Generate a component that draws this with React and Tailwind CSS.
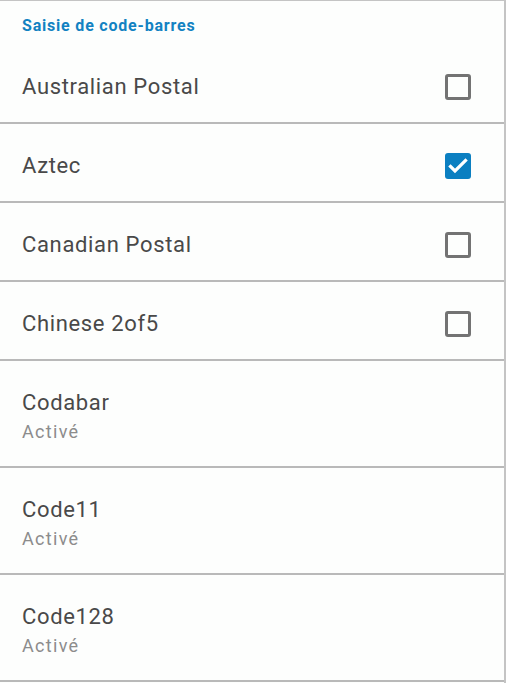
import React, { useState } from "react";

const items = [
  { name: "Australian Postal", checkbox: true, checked: false },
  { name: "Aztec", checkbox: true, checked: true },
  { name: "Canadian Postal", checkbox: true, checked: false },
  { name: "Chinese 2of5", checkbox: true, checked: false },
  { name: "Codabar", summary: "Activé" },
  { name: "Code11", summary: "Activé" },
  { name: "Code128", summary: "Activé" },
];

const CheckBox = ({ checked, onClick }) => (
  <button
    onClick={onClick}
    className={
      checked
        ? "w-[26px] h-[26px] rounded-[3px] bg-[#0b7fc1] flex items-center justify-center"
        : "w-[26px] h-[26px] rounded-[3px] border-[3px] border-[#737373]"
    }
  >
    {checked && (
      <svg width="26" height="26" viewBox="0 0 26 26" fill="none">
        <path
          d="M5.5 13.5l4.5 4.5L20.5 7.5"
          stroke="white"
          strokeWidth="3.2"
          strokeLinecap="square"
        />
      </svg>
    )}
  </button>
);

const App = () => {
  const [state, setState] = useState(items.map((i) => !!i.checked));

  const toggle = (idx) => {
    const next = [...state];
    next[idx] = !next[idx];
    setState(next);
  };

  return (
    <div
      className="w-[506px] h-[683px] bg-[#fdfefd] border-t border-r-2 border-[#c4c4c4] overflow-hidden"
      style={{ fontFamily: "Roboto, 'Noto Sans', sans-serif" }}
    >
      <div className="h-[44px] pt-[6px] px-[22px] flex items-center">
        <span className="text-[16px] tracking-[0.8px] font-bold text-[#1282c2]">
          Saisie de code-barres
        </span>
      </div>

      {items.map((item, idx) =>
        item.checkbox ? (
          <div
            key={item.name}
            className="h-[79px] border-b-2 border-[#b9b9b9] pt-[6px] pl-[22px] pr-[33px] flex items-center justify-between"
          >
            <span className="text-[22px] tracking-[0.65px] text-[#494949]">
              {item.name}
            </span>
            <CheckBox checked={state[idx]} onClick={() => toggle(idx)} />
          </div>
        ) : (
          <div
            key={item.name}
            className="h-[107px] border-b-2 border-[#b9b9b9] pl-[22px] pt-[28px]"
          >
            <div className="text-[22px] tracking-[0.65px] leading-[28px] text-[#494949]">
              {item.name}
            </div>
            <div className="mt-[3px] text-[18px] tracking-[1.3px] leading-[24px] text-[#8c8c8c]">
              {item.summary}
            </div>
          </div>
        )
      )}
    </div>
  );
};

export default App;
